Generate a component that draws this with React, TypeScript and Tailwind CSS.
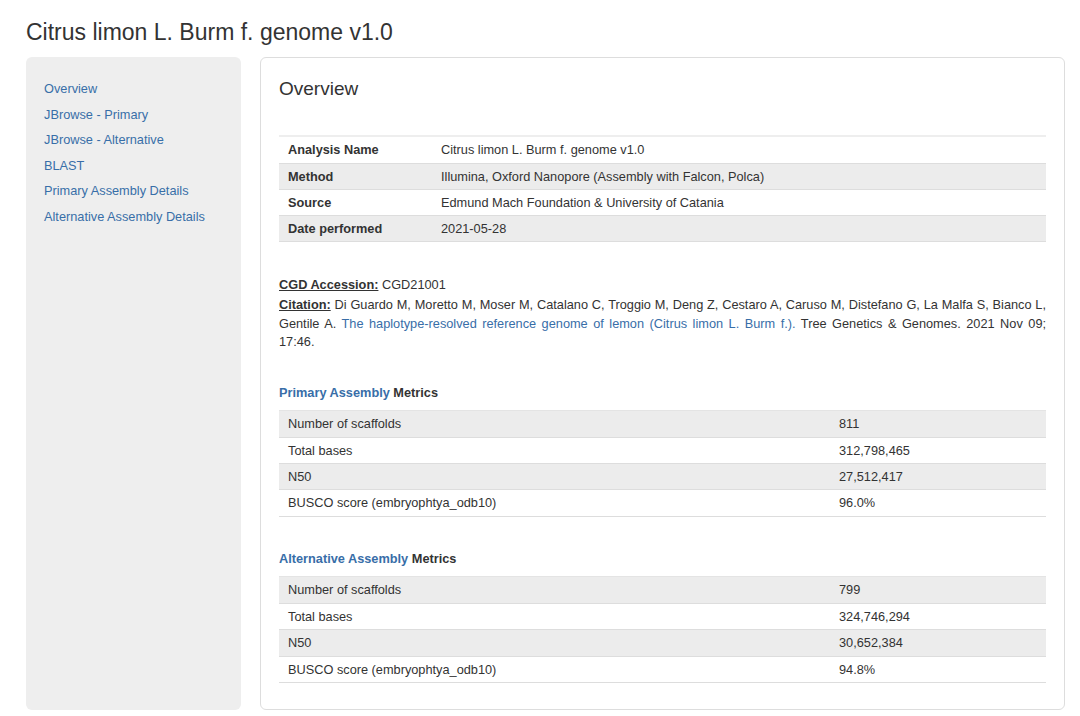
const navItems = [
  "Overview",
  "JBrowse - Primary",
  "JBrowse - Alternative",
  "BLAST",
  "Primary Assembly Details",
  "Alternative Assembly Details",
];

const info = [
  ["Analysis Name", "Citrus limon L. Burm f. genome v1.0"],
  ["Method", "Illumina, Oxford Nanopore (Assembly with Falcon, Polca)"],
  ["Source", "Edmund Mach Foundation & University of Catania"],
  ["Date performed", "2021-05-28"],
];

const primary = [
  ["Number of scaffolds", "811"],
  ["Total bases", "312,798,465"],
  ["N50", "27,512,417"],
  ["BUSCO score (embryophtya_odb10)", "96.0%"],
];

const alternative = [
  ["Number of scaffolds", "799"],
  ["Total bases", "324,746,294"],
  ["N50", "30,652,384"],
  ["BUSCO score (embryophtya_odb10)", "94.8%"],
];

function MetricsTable({ rows }: { rows: string[][] }) {
  return (
    <div className="mt-[7px] border-t border-[#e4e4e4] border-b border-b-[#ddd]">
      {rows.map(([k, v], i) => (
        <div
          key={k}
          className={
            "flex h-[26.3px] items-center " +
            (i > 0 ? "border-t border-[#ddd] " : "") +
            (i % 2 === 0 ? "bg-[#ececec]" : "bg-white")
          }
        >
          <div className="w-[560px] pl-[9px]">{k}</div>
          <div>{v}</div>
        </div>
      ))}
    </div>
  );
}

export default function App() {
  return (
    <div
      className="min-h-[716px] bg-white pl-[26px] pr-[15px] pt-[18px] text-[12.75px] text-[#333]"
      style={{ fontFamily: '"Liberation Sans", Arial, sans-serif' }}
    >
      <h1 className="text-[23px] leading-[28px]">Citrus limon L. Burm f. genome v1.0</h1>
      <div className="mt-[11px] flex h-[653px] gap-[19px]">
        <aside className="w-[215px] shrink-0 rounded-[6px] bg-[#eeeeee] px-[18px] pt-[19px]">
          {navItems.map((n) => (
            <a key={n} href="#" className="block leading-[25.5px] text-[#386ea8]">
              {n}
            </a>
          ))}
        </aside>
        <main className="flex-1 rounded-[6px] border border-[#dddddd] px-[18px] pt-[18px]">
          <h2 className="text-[19px] leading-[26px]">Overview</h2>

          <div className="mt-[33px] border-t-2 border-[#eeeeee] border-b border-b-[#ddd]">
            {info.map(([k, v], i) => (
              <div
                key={k}
                className={
                  "flex h-[26px] items-center " +
                  (i > 0 ? "border-t border-[#ddd] " : "") +
                  (i % 2 === 1 ? "bg-[#ececec]" : "bg-white")
                }
              >
                <div className="w-[162px] pl-[9px] font-bold">{k}</div>
                <div>{v}</div>
              </div>
            ))}
          </div>

          <p className="mt-[34px] mb-[1.5px] leading-[18.5px]">
            <span className="font-bold underline">CGD Accession:</span> CGD21001
          </p>
          <p className="text-justify leading-[18.5px]">
            <span className="font-bold underline">Citation:</span> Di Guardo M, Moretto M, Moser M,
            Catalano C, Troggio M, Deng Z, Cestaro A, Caruso M, Distefano G, La Malfa S, Bianco L,
            Gentile A.{" "}
            <a href="#" className="text-[#386ea8]">
              The haplotype-resolved reference genome of lemon (Citrus limon L. Burm f.).
            </a>{" "}
            Tree Genetics &amp; Genomes. 2021 Nov 09; 17:46.
          </p>

          <h3 className="mt-[31px] font-bold leading-[20px]">
            <a href="#" className="text-[#386ea8]">Primary Assembly</a> Metrics
          </h3>
          <MetricsTable rows={primary} />

          <h3 className="mt-[32px] font-bold leading-[20px]">
            <a href="#" className="text-[#386ea8]">Alternative Assembly</a> Metrics
          </h3>
          <MetricsTable rows={alternative} />
        </main>
      </div>
    </div>
  );
}
